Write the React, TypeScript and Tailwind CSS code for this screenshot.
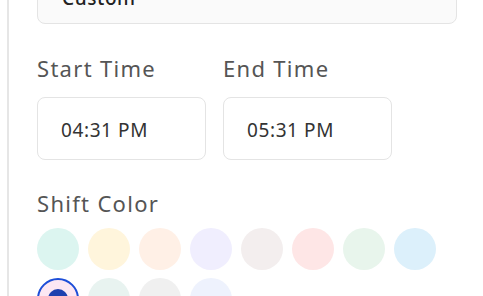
const colors = [
  "#dcf5f0",
  "#fff5dc",
  "#fff0e6",
  "#f0eefe",
  "#f3eeee",
  "#fee6e6",
  "#e8f5ec",
  "#dcf0fb",
  "#fce7f3",
  "#e8f3f0",
  "#f0f0f0",
  "#eef2fd",
]

function TimeField({ label, value }: { label: string; value: string }) {
  return (
    <div className="flex flex-col">
      <p className="text-[22px] leading-[28px] tracking-[1.3px] text-[#555]">{label}</p>
      <div className="mt-[15px] w-[169px] h-[63px] rounded-lg border border-[#e4e4e4] bg-white flex items-center pl-[23px] pt-[3px] text-[19px] tracking-[0.6px] text-[#333]">
        {value}
      </div>
    </div>
  )
}

export default function App() {
  return (
    <div
      className="w-[483px] h-[296px] overflow-hidden bg-white flex items-start"
      style={{ fontFamily: '"Noto Sans", sans-serif' }}
    >
      <div className="ml-[7px] w-[2px] self-stretch bg-[#e6e6e6]" />
      <div className="ml-[28px] flex flex-col -mt-[40px] shrink-0">
        <div className="w-[420px] h-[64px] shrink-0 rounded-lg border border-[#e4e4e4] bg-[#fafafa] flex items-center pl-6 pt-[12px] text-[19px] font-medium tracking-[0.6px] text-[#222]">
          Custom
        </div>
        <div className="mt-[30px] flex gap-[17px]">
          <TimeField label="Start Time" value="04:31 PM" />
          <TimeField label="End Time" value="05:31 PM" />
        </div>
        <p className="mt-[29px] text-[22px] leading-[28px] tracking-[1.3px] text-[#555]">Shift Color</p>
        <div className="mt-[11px] grid grid-cols-8 gap-x-[9px] gap-y-[8px] w-[399px]">
          {colors.map((c, i) => (
            <div
              key={c}
              className={
                i === 8
                  ? "w-[42px] h-[42px] rounded-full border-2 border-[#1d4ed8] flex items-center justify-center"
                  : "w-[42px] h-[42px] rounded-full"
              }
              style={{ backgroundColor: c }}
            >
              {i === 8 && <div className="w-[20px] h-[20px] rounded-full bg-[#1e40af]" />}
            </div>
          ))}
        </div>
      </div>
    </div>
  )
}
